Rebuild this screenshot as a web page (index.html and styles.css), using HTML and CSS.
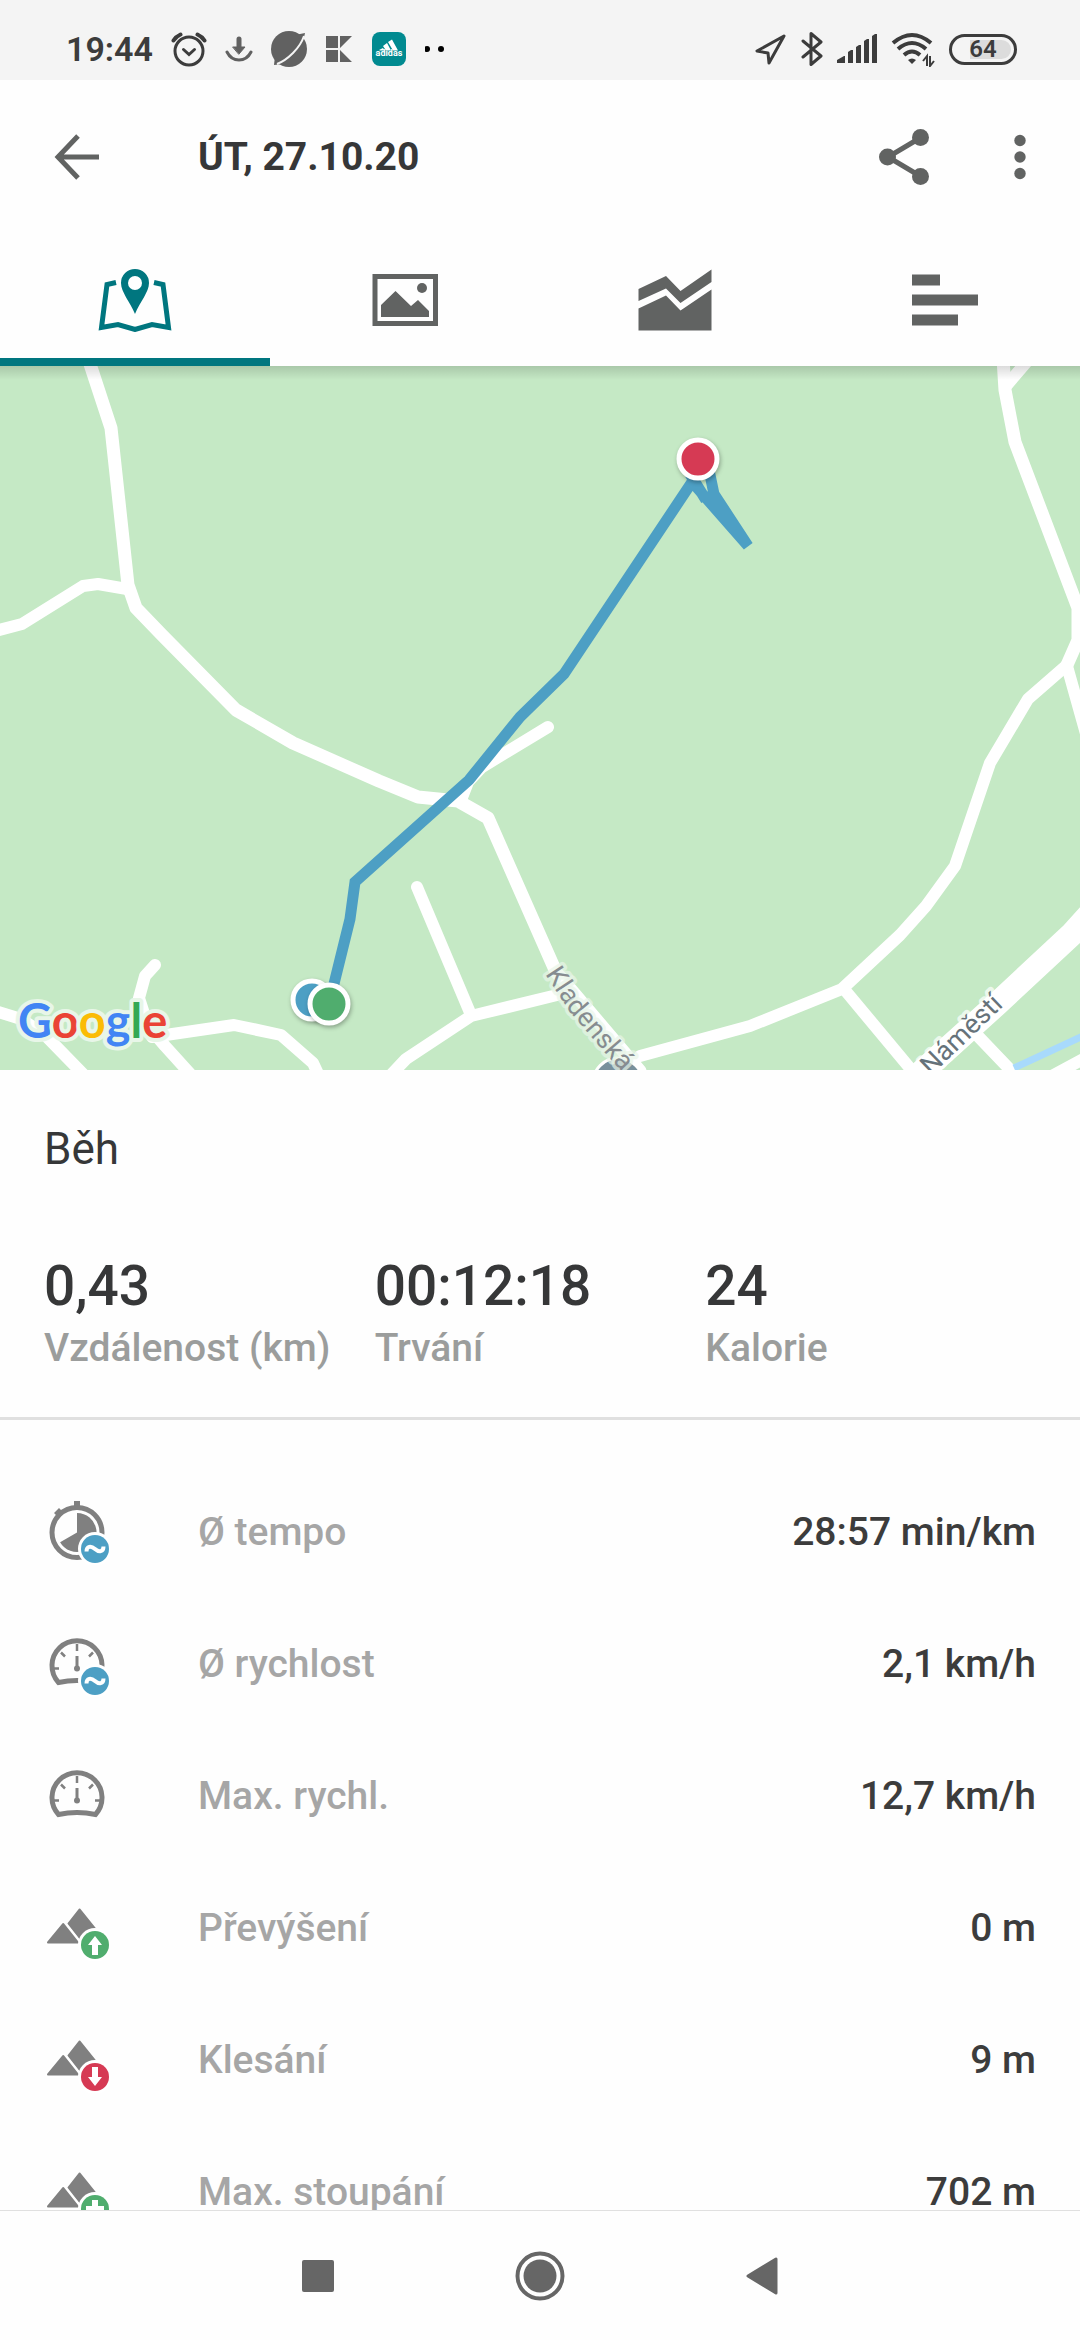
FILE: index.html
```html
<!DOCTYPE html>
<html lang="cs">
<head>
  <meta charset="UTF-8">
  <title>Běh - ÚT, 27.10.20</title>
  <meta name="viewport" content="width=device-width, initial-scale=1.0">
  <link rel="stylesheet" href="styles.css">
</head>
<body>
  <!-- shared shapes for the stat icons -->
  <svg class="defs" width="0" height="0" aria-hidden="true">
    <defs>
      <g id="gauge">
        <path d="M14.500 51.500 A25 25 0 1 1 51.500 51.500 Q33 47.500 14.500 51.500 Z" fill="none" stroke="#808080" stroke-width="5"/>
        <path d="M33 13v7M9 37.500h6M51 37.500h6M17 21.500l4 4M49 21.500l-4 4" stroke="#808080" stroke-width="2.500"/>
        <path d="M33 25v12" stroke="#808080" stroke-width="3"/>
        <circle cx="33" cy="37.500" r="3" fill="#808080"/>
      </g>
      <g id="hills" fill="#808080" stroke="#808080" stroke-width="2" stroke-linejoin="round">
        <path d="M35.500 14.500L24.500 28.500L39 47L52 35Z"/>
        <path d="M19.300 28.500L3.500 48H35Z" stroke="#fff" stroke-width="5"/>
        <path d="M19.300 29L4 47.500H34Z"/>
      </g>
      <g id="avg">
        <circle cx="51" cy="50" r="17" fill="#fff"/>
        <circle cx="51" cy="50" r="14" fill="#4d9fc4"/>
        <path d="M42.500 52.500C42.500 47 47 46.500 51 50S59.500 53 59.500 47.500" fill="none" stroke="#fff" stroke-width="4"/>
      </g>
    </defs>
  </svg>

  <div class="status">
    <span class="time">19:44</span>
    <svg width="36" height="36" viewBox="0 0 36 36" fill="none" stroke="#3c3c3c" stroke-width="3" stroke-linecap="round">
      <circle cx="18" cy="20" r="14"/>
      <path d="M12.500 18.500l5.500 5 5.500-5"/>
      <path d="M2.500 9.500q2.500-4 7-6M33.500 9.500q-2.500-4-7-6" stroke-width="4"/>
    </svg>
    <svg width="28" height="28" viewBox="0 0 28 28" fill="none" stroke="#616161" stroke-linecap="round">
      <path d="M14 4v9" stroke-width="5"/>
      <path d="M8 12h12l-6 7z" fill="#616161" stroke-width="1"/>
      <path d="M2 17q4 8 12 8t12-8" stroke-width="3"/>
    </svg>
    <svg width="36" height="36" viewBox="0 0 36 36">
      <circle cx="18" cy="18" r="18" fill="#616161"/>
      <path d="M24 4L34 2L32 11ZM12 33L3 34L4 25Z" fill="#616161"/>
      <path d="M33 5Q30 14 22 22T6 33" fill="none" stroke="#f4f4f4" stroke-width="2"/>
    </svg>
    <svg width="28" height="28" viewBox="0 0 28 28" fill="#616161">
      <path d="M1 1h12v12H1zM1 15h12v12H1zM15 1h12L15 13zM15 15L27 27H15z"/>
    </svg>
    <svg width="36" height="36" viewBox="0 0 36 36">
      <rect x="1" y="1" width="34" height="34" rx="8" fill="#018a90"/>
      <path d="M8 19l4-2 1.500 2.500H9zM12 15l4-3 4 7.500h-5zM17 11l4-2.500 6 11h-5z" fill="#fff"/>
      <text class="brand" x="18" y="25" text-anchor="middle">adidas</text>
    </svg>
    <svg width="24" height="8" viewBox="0 0 24 8" fill="#000">
      <circle cx="2" cy="4" r="3"/><circle cx="16" cy="4" r="3"/>
    </svg>

    <div class="status-right">
      <svg width="32" height="32" viewBox="0 0 32 32" fill="none" stroke="#3c3c3c" stroke-width="3" stroke-linejoin="round">
        <path d="M29 3L2 18l11 2 1 10z"/>
      </svg>
      <svg width="22" height="36" viewBox="0 0 22 36" fill="none" stroke="#3c3c3c" stroke-width="3" stroke-linecap="round" stroke-linejoin="round">
        <path d="M2 10l18 15-10 8.500V2.500L20 11 2 26"/>
      </svg>
      <svg width="40" height="30" viewBox="0 0 40 30" fill="#3c3c3c">
        <path d="M0 29v-3l7-4h1v7zM11 18l3-2h2v13h-5zM19 13l3-2h2v18h-5zM27 7l3-2h2v24h-5zM35 2l3-2h2v29h-5z"/>
      </svg>
      <svg width="44" height="36" viewBox="0 0 44 36" fill="none" stroke="#3c3c3c" stroke-width="4">
        <path d="M2 12q19-16 38 0M7 18q14-12 28 0M13 24q8-7 16 0"/>
        <path d="M17 29q4-3 8 0l-4 4z" fill="#3c3c3c" stroke="none"/>
        <path d="M36 35V25l-4 5M39 25v10l4-5" stroke-width="2"/>
      </svg>
      <span class="battery">64</span>
    </div>
  </div>

  <header class="appbar">
    <button class="icon-btn back" aria-label="Zpět">
      <svg width="46" height="46" viewBox="0 0 46 46" fill="none" stroke="#616362" stroke-width="5">
        <path d="M45 23H5M24 2L4 23l20 21"/>
      </svg>
    </button>
    <h1>ÚT, 27.10.20</h1>
    <button class="icon-btn share" aria-label="Sdílet">
      <svg width="50" height="56" viewBox="0 0 50 56" fill="#616362">
        <path d="M41 9L9 28l32 19" fill="none" stroke="#616362" stroke-width="5"/>
        <circle cx="41.500" cy="8.500" r="8.500"/><circle cx="8.500" cy="28" r="8.500"/><circle cx="41.500" cy="47.500" r="8.500"/>
      </svg>
    </button>
    <button class="icon-btn" aria-label="Další možnosti">
      <svg width="12" height="46" viewBox="0 0 12 46" fill="#616362">
        <circle cx="6" cy="6.500" r="5.700"/><circle cx="6" cy="23" r="5.700"/><circle cx="6" cy="39.500" r="5.700"/>
      </svg>
    </button>
  </header>

  <nav class="tabs">
    <button class="tab active" aria-label="Mapa">
      <svg width="80" height="64" viewBox="0 0 80 64">
        <path d="M21 14.500L12 16.500L6.500 59.500L23 56.500L40 61.500L57 56.500L73.500 59.500L68 16.500L59 14.500" fill="none" stroke="#00767f" stroke-width="5"/>
        <path d="M40 1a14 14 0 0 0-14 14c0 9 9 19 14 31 5-12 14-22 14-31a14 14 0 0 0-14-14z" fill="#00767f"/>
        <circle cx="40" cy="15" r="7" fill="#fff"/>
      </svg>
    </button>
    <button class="tab" aria-label="Fotky">
      <svg width="80" height="64" viewBox="0 0 80 64" fill="#616362">
        <rect x="10" y="8.500" width="60.500" height="47" fill="none" stroke="#616362" stroke-width="5"/>
        <path d="M16 49V37l14.500-14L46 38l7-6 11 11v6z"/>
        <circle cx="57" cy="20" r="5"/>
      </svg>
    </button>
    <button class="tab" aria-label="Grafy">
      <svg width="80" height="64" viewBox="0 0 80 64" fill="#616362">
        <path d="M3.500 21L31 8 45.500 23 76.500 1.500V14L45.500 35 31 20.500 3.500 33z"/>
        <path d="M3.500 40.500L31 27.500 45.500 42.500 76.500 21.500v41H3.500z"/>
      </svg>
    </button>
    <button class="tab" aria-label="Okruhy">
      <svg width="80" height="64" viewBox="0 0 80 64" fill="#616362">
        <path d="M7 6.500h28v11H7zM7 26.500h66v11H7zM7 46.500h46v11H7z"/>
      </svg>
    </button>
  </nav>

  <main>
    <div class="map">
      <svg viewBox="0 0 1080 704" role="img" aria-label="Mapa trasy">
        <rect width="1080" height="704" fill="#c5e9c5"/>
        <g class="roads">
          <path class="w13" d="M88 -8L111 62L128 219L136 242L162 269L236 344L293 377L379 415L418 431L458 435L488 452L556 606L640 705"/>
          <path d="M-5 265L22 258L83 220L98 218L127 223"/>
          <path d="M461 434L468 416L482 401L548 361"/>
          <path d="M417 521L471 649"/>
          <path d="M388 712L406 693L471 650L557 629"/>
          <path d="M-5 645L21 653L45 669L85 710"/>
          <path d="M155 599L145 610L139 632L148 660L165 680L194 712"/>
          <path d="M152 671L234 659L281 669L313 697L320 712"/>
          <path class="w13" d="M1003 -8L1005 24L1015 76L1078 242V274L1067 299"/>
          <path d="M1067 299L1028 333L990 397L955 500L926 540L900 569L842 623L750 660L640 690"/>
          <path d="M1006 20L1030 -8"/>
          <path d="M1067 300L1090 382"/>
          <path d="M844 623L914 707"/>
          <path class="wide" d="M1090 548L1072 568L998 637L915 712"/>
          <path d="M975 667L1018 712"/>
          <path d="M1050 711L1085 692"/>
        </g>
        <path d="M1014 702L1085 669" stroke="#a8dafc" stroke-width="7"/>

        <circle cx="618" cy="717" r="25" fill="#78909c" stroke="#fff" stroke-width="3"/>
        <path id="street" d="M545 608L570 646L612 695L650 735" fill="none"/>
        <text class="street"><textPath href="#street">Kladenská</textPath></text>
        <text class="street dark" transform="translate(931 710) rotate(-44)">Náměstí</text>

        <path class="route" d="M330 634L350 553L355 516L469 414L520 351L564 308L692 116L748 180L714 128L709 104M690 108L706 134"/>
        <g class="marks">
          <circle cx="312" cy="634" r="19" fill="#4d9fc4"/>
          <circle cx="329" cy="638" r="19" fill="#50ad6e"/>
          <circle cx="698" cy="93" r="19" fill="#d63a54"/>
        </g>
        <text class="google" x="18" y="672"><tspan fill="#4285f4">G</tspan><tspan fill="#ea4335">o</tspan><tspan fill="#fbbc05">o</tspan><tspan fill="#4285f4">g</tspan><tspan fill="#34a853">l</tspan><tspan fill="#ea4335">e</tspan></text>
      </svg>
    </div>

    <section class="summary">
      <h2>Běh</h2>
      <dl class="totals">
        <div><dd>0,43</dd><dt>Vzdálenost (km)</dt></div>
        <div><dd>00:12:18</dd><dt>Trvání</dt></div>
        <div><dd>24</dd><dt>Kalorie</dt></div>
      </dl>
    </section>

    <table class="stats">
      <tr>
        <td class="icon">
          <svg width="66" height="66" viewBox="0 0 66 66">
            <circle cx="33" cy="33.500" r="25" fill="none" stroke="#808080" stroke-width="5"/>
            <path d="M30 2h6v6h-6zM10 14l5-5 3 3-5 5z" fill="#808080"/>
            <path d="M33 33.500V14A19.500 19.500 0 1 1 16.100 43.200Z" fill="#808080"/>
            <use href="#avg"/>
          </svg>
        </td>
        <th scope="row">Ø tempo</th>
        <td class="value">28:57 min/km</td>
      </tr>
      <tr>
        <td class="icon">
          <svg width="66" height="66" viewBox="0 0 66 66"><use href="#gauge"/><use href="#avg"/></svg>
        </td>
        <th scope="row">Ø rychlost</th>
        <td class="value">2,1 km/h</td>
      </tr>
      <tr>
        <td class="icon">
          <svg width="66" height="66" viewBox="0 0 66 66"><use href="#gauge"/></svg>
        </td>
        <th scope="row">Max. rychl.</th>
        <td class="value">12,7 km/h</td>
      </tr>
      <tr>
        <td class="icon">
          <svg width="66" height="66" viewBox="0 0 66 66">
            <use href="#hills"/>
            <circle cx="51" cy="50" r="17" fill="#fff"/>
            <circle cx="51" cy="50" r="14" fill="#50ad6e"/>
            <path d="M51 41l7 9h-4v10h-6V50h-4z" fill="#fff"/>
          </svg>
        </td>
        <th scope="row">Převýšení</th>
        <td class="value">0 m</td>
      </tr>
      <tr>
        <td class="icon">
          <svg width="66" height="66" viewBox="0 0 66 66">
            <use href="#hills"/>
            <circle cx="51" cy="50" r="17" fill="#fff"/>
            <circle cx="51" cy="50" r="14" fill="#d63a54"/>
            <path d="M51 59l7-9h-4V40h-6v10h-4z" fill="#fff"/>
          </svg>
        </td>
        <th scope="row">Klesání</th>
        <td class="value">9 m</td>
      </tr>
      <tr>
        <td class="icon">
          <svg width="66" height="66" viewBox="0 0 66 66">
            <use href="#hills"/>
            <circle cx="51" cy="50" r="17" fill="#fff"/>
            <circle cx="51" cy="50" r="14" fill="#50ad6e"/>
            <path d="M48 41h6v6h6v6h-6v6h-6v-6h-6v-6h6z" fill="#fff"/>
          </svg>
        </td>
        <th scope="row">Max. stoupání</th>
        <td class="value">702 m</td>
      </tr>
    </table>
  </main>

  <nav class="sysnav">
    <button aria-label="Poslední aplikace">
      <svg width="32" height="34" viewBox="0 0 32 34"><rect y="1" width="32" height="32" rx="2" fill="#666"/></svg>
    </button>
    <button aria-label="Domů">
      <svg width="50" height="50" viewBox="0 0 50 50">
        <circle cx="25" cy="25" r="22.500" fill="none" stroke="#666" stroke-width="4"/>
        <circle cx="25" cy="25" r="16.500" fill="#666"/>
      </svg>
    </button>
    <button aria-label="Zpět">
      <svg width="32" height="38" viewBox="0 0 32 38">
        <path d="M2 19L30 2v34z" fill="#666" stroke="#666" stroke-width="3" stroke-linejoin="round"/>
      </svg>
    </button>
  </nav>
</body>
</html>
```

FILE: styles.css
```css
* {
  box-sizing: border-box;
}
body {
  margin: 0;
  height: 100vh;
  display: flex;
  flex-direction: column;
  background-color: #fefefe;
  color: #363738;
  font-family: Roboto, "Noto Sans", sans-serif;
}
svg {
  display: block;
  flex: none;
}
.defs {
  position: absolute;
}
button {
  background: none;
  border: none;
  padding: 0;
  cursor: pointer;
  display: flex;
  align-items: center;
  justify-content: center;
}

/* status bar */
.status {
  flex: none;
  display: flex;
  align-items: center;
  gap: 18px;
  height: 80px;
  padding: 18px 63px 0 66px;
  background-color: #f4f4f4;
}
.time {
  font-size: 34px;
  font-weight: 600;
  color: #3c3c3c;
}
.brand {
  font-size: 9px;
  font-weight: 700;
  fill: #fff;
}
.status-right {
  margin-left: auto;
  display: flex;
  align-items: center;
  gap: 14px;
}
.battery {
  width: 68px;
  height: 31px;
  border: 3px solid #3c3c3c;
  border-radius: 16px;
  background: linear-gradient(to right, #f4f4f4 18px, #dcdcdc 18px) padding-box;
  box-shadow: inset 0 0 0 3px #f4f4f4;
  color: #3c3c3c;
  font-size: 24px;
  font-weight: 600;
  line-height: 25px;
  text-align: center;
}

/* app bar */
.appbar {
  flex: none;
  display: flex;
  align-items: center;
  height: 154px;
  padding: 0 54px;
}
.appbar h1 {
  flex: 1;
  margin: 0;
  font-size: 39px;
  font-weight: 700;
}
.back {
  margin-right: 98px;
}
.share {
  margin-right: 85px;
}

.tabs {
  flex: none;
  display: grid;
  grid-template-columns: repeat(4, 1fr);
  height: 132px;
}
.tab {
  border-top: 8px solid transparent;
  border-bottom: 8px solid transparent;
}
.tab.active {
  border-bottom-color: #00767f;
}

main {
  flex: 1;
  min-height: 0;
  overflow-y: auto;
  scrollbar-width: none;
}

/* map */
.map {
  position: relative;
}
.map svg {
  width: 100%;
  height: auto;
}
.map::after {
  content: "";
  position: absolute;
  inset: 0 0 auto;
  height: 14px;
  background: linear-gradient(rgba(0, 0, 0, 0.14), rgba(0, 0, 0, 0));
}
.roads path {
  fill: none;
  stroke: #fff;
  stroke-width: 12px;
  stroke-linecap: round;
  stroke-linejoin: round;
}
.roads .w13 {
  stroke-width: 13px;
}
.roads .wide {
  stroke-width: 24px;
}
.street {
  font-size: 27px;
  fill: #868c90;
  stroke: #e8f5e8;
  stroke-opacity: 0.7;
  stroke-width: 7px;
  stroke-linejoin: round;
  paint-order: stroke;
}
.street.dark {
  fill: #66727a;
  stroke: #fff;
}
.route {
  fill: none;
  stroke: #4d9fc4;
  stroke-width: 11px;
}
.marks circle {
  stroke: #fff;
  stroke-width: 5px;
  filter: drop-shadow(1px 2px 2px rgba(0, 0, 0, 0.3));
}
.google {
  font-family: Lato, sans-serif;
  font-size: 47px;
  font-weight: 700;
  stroke: #e8f6e8;
  stroke-width: 8px;
  stroke-linejoin: round;
  paint-order: stroke;
}

/* summary */
.summary {
  padding: 53px 44px 47px;
  border-bottom: 3px solid #e0e0e0;
}
.summary h2 {
  margin: 0 0 79px;
  font-size: 44px;
  font-weight: 400;
  line-height: 52px;
}
.totals {
  display: grid;
  grid-template-columns: repeat(3, 1fr);
  margin: 0;
  white-space: nowrap;
}
.totals dd {
  margin: 0 0 8px;
  font-size: 55px;
  font-weight: 500;
  line-height: 64px;
}
.totals dt {
  font-size: 39px;
  font-weight: 500;
  line-height: 44px;
  color: #9b9d9c;
}

/* stat rows */
.stats {
  width: 100%;
  margin-top: 46px;
  border-collapse: collapse;
  font-size: 39px;
  line-height: 44px;
}
.stats tr {
  height: 132px;
}
.stats td,
.stats th {
  padding: 0;
  font-weight: 500;
}
.stats .icon {
  width: 198px;
  padding-left: 44px;
}
.stats th {
  text-align: left;
  color: #a6a6a6;
}
.stats .value {
  padding-right: 44px;
  text-align: right;
  color: #3c3c3c;
}

.sysnav {
  flex: none;
  display: flex;
  justify-content: center;
  gap: 126px;
  height: 130px;
  border-top: 1px solid #e0e0e0;
}
.sysnav button {
  width: 96px;
}
```
